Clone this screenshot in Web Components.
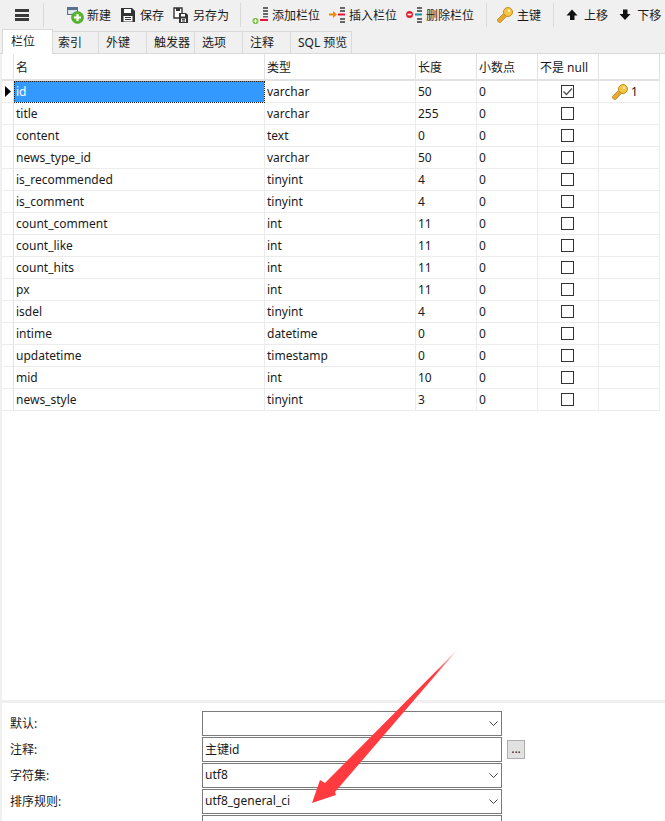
<!DOCTYPE html>
<html lang="zh">
<head>
<meta charset="utf-8">
<title>设计表</title>
<style>
	html, body {
		margin: 0;
		height: 821px;
		overflow: hidden;
		background: #f0f0f0;
		color: #1a1a1a;
		font: 12px "Noto Sans", "Noto Sans CJK SC", sans-serif;
	}
</style>
</head>
<body>
<nc-toolbar></nc-toolbar>
<nc-tabs active="栏位" tabs="栏位:51,索引:46,外键:48,触发器:48,选项:48,注释:48,SQL 预览:61"></nc-tabs>
<nc-grid></nc-grid>
<nc-form></nc-form>
<nc-arrow></nc-arrow>

<script>
const KEY_ICON = `<svg width="16" height="16" viewBox="0 0 16 16">
	<path d="M0.500 14 L0.500 12.500 L6.500 6.500 L9.500 9.500 L3.500 15.500 L2 15.500 Z" fill="#e6a92f" stroke="#b57f16" stroke-width=".7"/>
	<circle cx="11" cy="5" r="4.500" fill="#f7c544" stroke="#c28d1c"/>
	<circle cx="12" cy="3.800" r="1.200" fill="#fff3c4"/>
</svg>`;

const ICONS = {
	add_table: `<svg width="17" height="17" viewBox="0 0 17 17">
		<rect x="0.500" y="0.500" width="10" height="7" fill="#dbe6f1" stroke="#59718c"/>
		<path d="M0 1h11v2H0z" fill="#59718c"/>
		<circle cx="10.500" cy="10.500" r="6" fill="#56b82a" stroke="#3f9a1e" stroke-width=".6"/>
		<path d="M10.500 7v7M7 10.500h7" stroke="#fff" stroke-width="2.200"/>
	</svg>`,
	save: `<svg width="16" height="16" viewBox="0 0 16 16">
		<path d="M1 1h11l3 3v11H1z" fill="#333"/>
		<path d="M4 2h7v4H4z" fill="#fff"/>
		<path d="M3.500 9h9v5.500h-9z" fill="#fff"/>
		<path d="M5 10.500h6M5 12.500h6" stroke="#333"/>
	</svg>`,
	save_as: `<svg width="16" height="17" viewBox="0 0 16 17">
		<path d="M1 1h8v10H1z" fill="#fff" stroke="#333" stroke-width="1.400"/>
		<path d="M3 1h4v3H3z" fill="#333"/>
		<path d="M6 6h7l2 2v8H6z" fill="#333"/>
		<path d="M8 7h4v2.500H8zM8 11.500h5v3.500H8z" fill="#fff"/>
		<path d="M9 12.700h3M9 14h3" stroke="#333"/>
	</svg>`,
	add_col: `<svg width="17" height="17" viewBox="0 0 17 17">
		<path d="M11 0h5v2h-5zM11 3h5v2h-5zM11 6h5v2h-5zM11 9h5v1.500h-5z" fill="#666"/>
		<path d="M8 12h8v2H8z" fill="#e8113f"/>
		<circle cx="3.500" cy="14" r="3" fill="#6cc02e"/>
		<path d="M3.500 12v4M1.500 14h4" stroke="#fff" stroke-width="1.200"/>
	</svg>`,
	insert_col: `<svg width="17" height="17" viewBox="0 0 17 17">
		<path d="M11 0h5v2h-5zM11 3h5v2h-5zM11 11h5v2h-5zM11 14h5v2h-5z" fill="#666"/>
		<path d="M9 6.500h7v2H9z" fill="#e8113f"/>
		<path d="M0 6.500h4V4l4 3.500L4 11V8.500H0z" fill="#f08a00"/>
	</svg>`,
	delete_col: `<svg width="17" height="17" viewBox="0 0 17 17">
		<path d="M11 0h5v2h-5zM11 3h5v2h-5zM11 11h5v2h-5zM11 14h5v2h-5z" fill="#666"/>
		<path d="M9 6.500h7v2H9z" fill="#1f8fa8"/>
		<circle cx="3.500" cy="7.500" r="3.500" fill="#d8202f"/>
		<path d="M1.500 6.700h4v1.600h-4z" fill="#fff"/>
	</svg>`,
	key: KEY_ICON,
	up: `<svg width="14" height="14" viewBox="0 0 14 14"><path d="M7 1.500L12.500 7.500H9.500V12H5V7.500H1.500z" fill="#111"/></svg>`,
	down: `<svg width="14" height="14" viewBox="0 0 14 14"><path d="M7 12L12.500 6H9.500V1.500H5V6H1.500z" fill="#111"/></svg>`,
};

class NcTool extends HTMLElement {
	constructor() {
		super();
		this.attachShadow({ mode: 'open' });
		this.shadowRoot.innerHTML = `
			<style>
				:host { display: flex; align-items: center; gap: 4px; height: 30px; white-space: nowrap; }
				.icon { display: flex; width: 16px; justify-content: center; }
				svg { display: block; overflow: visible; flex: none; }
			</style>
			<span class="icon">${ICONS[this.getAttribute('icon')] || ''}</span><slot></slot>`;
	}
}

class NcToolbar extends HTMLElement {
	constructor() {
		super();
		this.attachShadow({ mode: 'open' });
		this.shadowRoot.innerHTML = `
			<style>
				:host {
					display: flex;
					align-items: center;
					height: 30px;
					padding-left: 15px;
					background: #f0f0f0;
					font-size: 12px;
				}
				.menu { width: 14px; height: 12px; display: flex; flex-direction: column; justify-content: space-between; margin-right: 14px; }
				.menu i { display: block; height: 3px; background: #3a3a3a; }
				.sep { width: 1px; height: 24px; background: #d9d9d9; }
				.group { display: flex; gap: 9px; }
				.group.first { margin: 0 11px 0 23px; }
				.group.mid { margin: 0 12px 0 11px; }
				.group.key { margin: 0 12px 0 10px; }
				.group.last { margin-left: 10px; }
			</style>
			<div class="menu"><i></i><i></i><i></i></div>
			<div class="sep"></div>
			<div class="group first">
				<nc-tool icon="add_table">新建</nc-tool>
				<nc-tool icon="save">保存</nc-tool>
				<nc-tool icon="save_as">另存为</nc-tool>
			</div>
			<div class="sep"></div>
			<div class="group mid">
				<nc-tool icon="add_col">添加栏位</nc-tool>
				<nc-tool icon="insert_col">插入栏位</nc-tool>
				<nc-tool icon="delete_col">删除栏位</nc-tool>
			</div>
			<div class="sep"></div>
			<div class="group key">
				<nc-tool icon="key">主键</nc-tool>
			</div>
			<div class="sep"></div>
			<div class="group last">
				<nc-tool icon="up">上移</nc-tool>
				<nc-tool icon="down">下移</nc-tool>
			</div>`;
	}
}

class NcTabs extends HTMLElement {
	connectedCallback() {
		const active = this.getAttribute('active');
		const tabs = this.getAttribute('tabs').split(',').map((item) => item.split(':'));

		this.attachShadow({ mode: 'open' });
		this.shadowRoot.innerHTML = `
			<style>
				:host {
					display: flex;
					align-items: flex-end;
					height: 23px;
					padding-left: 2px;
					background: #f0f0f0;
					border-bottom: 1px solid #d9d9d9;
					font-size: 12px;
				}
				.tab {
					box-sizing: border-box;
					height: 22px;
					padding-left: 7px;
					line-height: 21px;
					background: #f0f0f0;
					border: 1px solid #d9d9d9;
					border-width: 1px 1px 0 0;
				}
				.tab.active + .tab { padding-left: 5px; }
				.tab.active {
					height: 25px;
					margin-bottom: -1px;
					padding-left: 8px;
					line-height: 24px;
					background: #fff;
					border-width: 1px 1px 0 1px;
				}
			</style>
			${tabs.map(([label, width]) => `<div class="tab${label === active ? ' active' : ''}" style="width:${width}px">${label}</div>`).join('')}`;
	}
}

const FIELDS = [
	['id', 'varchar', 50, 0, true, true],
	['title', 'varchar', 255, 0],
	['content', 'text', 0, 0],
	['news_type_id', 'varchar', 50, 0],
	['is_recommended', 'tinyint', 4, 0],
	['is_comment', 'tinyint', 4, 0],
	['count_comment', 'int', 11, 0],
	['count_like', 'int', 11, 0],
	['count_hits', 'int', 11, 0],
	['px', 'int', 11, 0],
	['isdel', 'tinyint', 4, 0],
	['intime', 'datetime', 0, 0],
	['updatetime', 'timestamp', 0, 0],
	['mid', 'int', 10, 0],
	['news_style', 'tinyint', 3, 0],
];

class NcGrid extends HTMLElement {
	constructor() {
		super();
		this.attachShadow({ mode: 'open' });
		const rows = FIELDS.map(([name, type, len, dec, notnull, primary], index) => `
			<div class="gutter">${index === 0 ? '<svg width="6" height="11" viewBox="0 0 6 11"><path d="M0 0l6 5.500L0 11z" fill="#000"/></svg>' : ''}</div>
			<div class="cell${index === 0 ? ' selected' : ''}">${name}</div>
			<div class="cell">${type}</div>
			<div class="cell">${len}</div>
			<div class="cell">${dec}</div>
			<div class="cell center"><span class="check">${notnull ? '<svg width="11" height="11" viewBox="0 0 11 11"><path d="M1.500 5.500L4.500 8.500L10 2.500" fill="none" stroke="#555" stroke-width="1.400"/></svg>' : ''}</span></div>
			<div class="cell pk">${primary ? KEY_ICON + '<span>1</span>' : ''}</div>`).join('');

		this.shadowRoot.innerHTML = `
			<style>
				:host {
					display: block;
					height: 646px;
					box-sizing: border-box;
					margin-left: 2px;
					background: #fff;
					font-size: 12px;
				}
				.table {
					display: grid;
					grid-template-columns: 12px 251px 151px 61px 61px 61px 61px;
					grid-auto-rows: 22px;
					grid-template-rows: 27px;
					width: 658px;
				}
				.head, .gutter, .cell {
					box-sizing: border-box;
					border-right: 1px solid #ececec;
					border-bottom: 1px solid #ececec;
					padding-left: 2px;
					line-height: 21px;
					white-space: nowrap;
					overflow: hidden;
				}
				.head { border-right-color: #e2e2e2; border-bottom: 2px solid #e2e2e2; line-height: 27px; }
				.gutter { padding: 0; display: flex; align-items: center; padding-left: 3px; border-right-color: #e2e2e2; }
				.cell.selected {
					background: #3399ff;
					color: #fff;
					outline: 1px dotted #222;
					outline-offset: -1px;
				}
				.center { display: flex; align-items: center; justify-content: center; padding: 0 1px 0 0; }
				.check {
					box-sizing: border-box;
					display: flex;
					align-items: center;
					justify-content: center;
					width: 13px;
					height: 13px;
					border: 1px solid #333;
					background: #fff;
				}
				.pk { display: flex; align-items: center; gap: 3px; padding-left: 13px; color: #1a1a1a; }
				.pk svg { display: block; }
			</style>
			<div class="table">
				<div class="head"></div>
				<div class="head">名</div>
				<div class="head">类型</div>
				<div class="head">长度</div>
				<div class="head">小数点</div>
				<div class="head">不是 null</div>
				<div class="head"></div>
				${rows}
			</div>`;
	}
}

class NcSelect extends HTMLElement {
	constructor() {
		super();
		this.attachShadow({ mode: 'open' });
		const plain = this.hasAttribute('plain');
		this.shadowRoot.innerHTML = `
			<style>
				:host {
					box-sizing: border-box;
					display: flex;
					align-items: center;
					width: 300px;
					height: 25px;
					padding: 0 3px 0 2px;
					border: 1px solid #7a7a7a;
					background: #fff;
					font-size: 12px;
				}
				.text { padding-bottom: 2px; }
				svg { display: block; margin-left: auto; }
			</style>
			<span class="text"><slot></slot></span>
			${plain ? '' : '<svg width="9" height="5" viewBox="0 0 9 5"><path d="M0.500 0.500L4.500 4.500L8.500 0.500" fill="none" stroke="#444"/></svg>'}`;
	}
}

class NcForm extends HTMLElement {
	constructor() {
		super();
		this.attachShadow({ mode: 'open' });
		this.shadowRoot.innerHTML = `
			<style>
				:host {
					display: block;
					height: 121px;
					overflow: hidden;
					margin-left: 2px;
					background: #fff;
					border-top: 3px solid #f0f0f0;
					box-sizing: border-box;
					padding-top: 8px;
					font-size: 12px;
				}
				.form {
					display: grid;
					grid-template-columns: 200px 300px auto;
					grid-auto-rows: 25px;
					row-gap: 1px;
					align-items: center;
				}
				label { padding: 0 0 2px 8px; }
				.more {
					box-sizing: border-box;
					width: 18px;
					height: 19px;
					margin-left: 5px;
					border: 1px solid #adadad;
					background: #e1e1e1;
					text-align: center;
					line-height: 15px;
				}
			</style>
			<div class="form">
				<label>默认:</label><nc-select></nc-select><span></span>
				<label>注释:</label><nc-select plain>主键id</nc-select><div class="more">...</div>
				<label>字符集:</label><nc-select>utf8</nc-select><span></span>
				<label>排序规则:</label><nc-select>utf8_general_ci</nc-select><span></span>
				<label></label><nc-select plain></nc-select><span></span>
			</div>`;
	}
}

// annotation drawn over the form, its place on the page is the content
class NcArrow extends HTMLElement {
	constructor() {
		super();
		this.attachShadow({ mode: 'open' });
		this.shadowRoot.innerHTML = `
			<style>
				:host { position: absolute; left: 300px; top: 640px; width: 170px; height: 170px; pointer-events: none; }
			</style>
			<svg width="170" height="170" viewBox="0 0 170 170">
				<defs>
					<linearGradient id="fade" x1="157" y1="10" x2="135" y2="33" gradientUnits="userSpaceOnUse">
						<stop offset="0" stop-color="#ff3b3f" stop-opacity=".3"/>
						<stop offset="1" stop-color="#ff3b3f"/>
					</linearGradient>
				</defs>
				<path d="M158 9 L25 143 L20 140 L12 163 L36 155 L35 152 Z" fill="url(#fade)"/>
			</svg>`;
	}
}

customElements.define('nc-tool', NcTool);
customElements.define('nc-toolbar', NcToolbar);
customElements.define('nc-tabs', NcTabs);
customElements.define('nc-grid', NcGrid);
customElements.define('nc-select', NcSelect);
customElements.define('nc-form', NcForm);
customElements.define('nc-arrow', NcArrow);
</script>
</body>
</html>
